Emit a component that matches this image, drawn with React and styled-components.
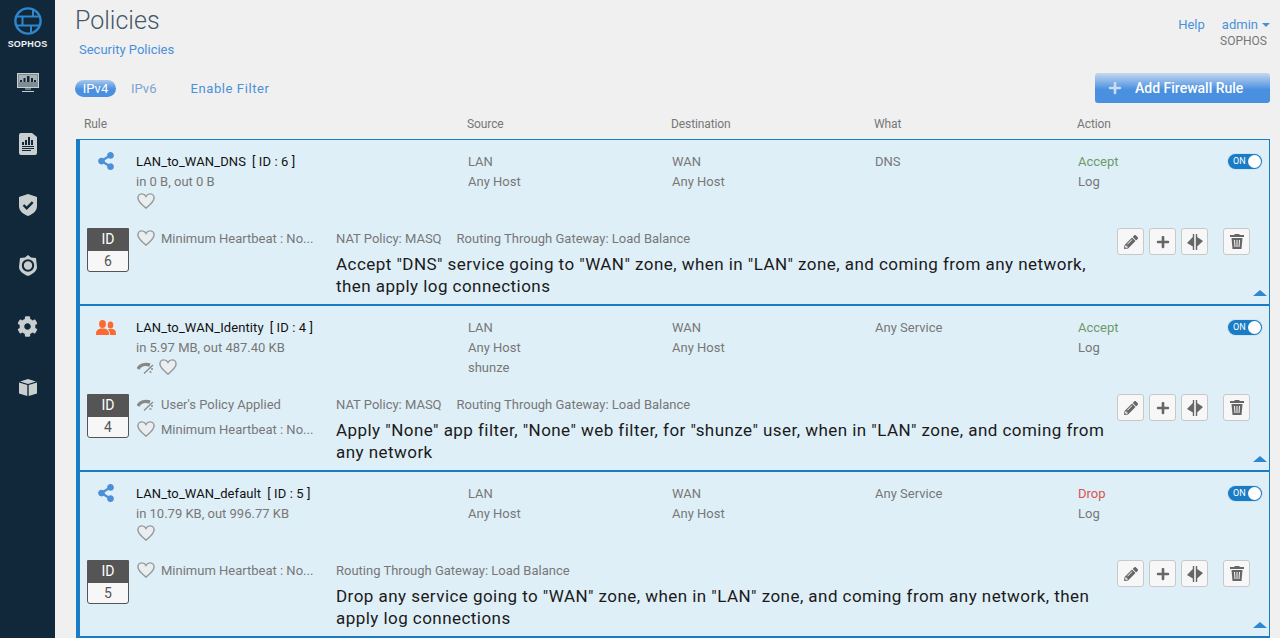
import React from "react";
import styled, { createGlobalStyle } from "styled-components";
import { FaCog, FaPencilAlt, FaPlus, FaShareAlt } from "react-icons/fa";

const Global = createGlobalStyle`
  html, body { margin: 0; padding: 0; height: 638px; overflow: hidden; background: #f0f0f0; }
  body { font-family: "Roboto", "Liberation Sans", sans-serif; font-size: 13px; color: #777; }
`;

const Page = styled.div`
  display: flex;
  height: 638px;
  overflow: hidden;
`;

const Sidebar = styled.nav`
  width: 55px;
  flex: none;
  background: #10283a;
  display: flex;
  flex-direction: column;
  align-items: center;
  padding-top: 7px;
  box-sizing: border-box;
`;

const Brand = styled.div`
  font-family: "Liberation Sans", sans-serif;
  font-weight: 700;
  font-size: 9px;
  letter-spacing: 0.2px;
  color: #f2f2f2;
  margin-top: 4px;
  margin-bottom: 3px;
`;

const NavItem = styled.div`
  height: 61px;
  width: 55px;
  display: flex;
  align-items: center;
  justify-content: center;
  color: #c9cfcf;
  flex: none;
`;

const Main = styled.main`
  flex: 1;
  padding: 0 10px 0 21px;
  min-width: 0;
`;

const Header = styled.header`
  display: flex;
  justify-content: space-between;
  height: 73px;
`;

const Title = styled.h1`
  font-size: 25px;
  line-height: 30px;
  font-weight: 300;
  color: #44586a;
  margin: 6px 0 0 -1px;
`;

const Crumb = styled.div`
  color: #4a90d9;
  font-size: 13px;
  line-height: 16px;
  margin: 6px 0 0 3px;
`;

const UserBox = styled.div`
  text-align: right;
  padding-top: 16px;
  line-height: 17px;
`;

const TopLink = styled.span`
  color: #4a90d9;
  margin-left: 17px;
`;

const Caret = styled.span`
  display: inline-block;
  margin-left: 4px;
  vertical-align: 2px;
  border: 4px solid transparent;
  border-top: 4px solid #4a90d9;
  border-bottom: 0;
`;

const Org = styled.div`
  font-size: 12px;
  color: #777;
  padding-right: 3px;
`;

const Toolbar = styled.div`
  display: flex;
  align-items: center;
  justify-content: space-between;
  height: 30px;
`;

const Tabs = styled.div`
  display: flex;
  align-items: center;
`;

const Pill = styled.span`
  color: #fff;
  width: 41px;
  height: 17px;
  line-height: 17px;
  text-align: center;
  border-radius: 9px;
  margin-left: -1px;
  background: linear-gradient(#a9c8ea, #4a90e0 55%);
`;

const Tab = styled.span`
  color: ${(p) => (p.$muted ? "#7ba4d2" : "#4a90d9")};
  margin-left: ${(p) => p.$gap}px;
  letter-spacing: ${(p) => (p.$wide ? "0.6px" : "0")};
`;

const AddButton = styled.button`
  width: 175px;
  height: 30px;
  border: 0;
  border-radius: 3px;
  background: linear-gradient(#c5d8ef, #4a90e0 55%);
  color: #fff;
  font: 500 14px "Roboto", sans-serif;
  display: flex;
  align-items: center;
  padding: 0 0 0 13px;
  gap: 13px;
  svg { color: #c9dcf2; }
`;

const HeadRow = styled.div`
  display: grid;
  grid-template-columns: 383px 204px 203px 203px 1fr;
  padding-left: 8px;
  height: 36px;
  line-height: 43px;
  font-size: 12px;
  letter-spacing: -0.1px;
  color: #777;
`;

const RuleList = styled.div`
  border-top: 1px solid #1a7cc4;
`;

const Rule = styled.section`
  position: relative;
  height: 166px;
  box-sizing: border-box;
  background: #dfeff8;
  border-left: 4px solid #1a7cc4;
  border-right: 1px solid #1a7cc4;
  border-bottom: 2px solid #1a7cc4;
`;

const Summary = styled.div`
  display: grid;
  grid-template-columns: 56px 332px 204px 203px 203px 1fr;
  height: 88px;
  padding-top: 12px;
  box-sizing: border-box;
  line-height: 20px;
`;

const RuleIcon = styled.div`
  padding-left: ${(p) => p.$left}px;
  padding-top: ${(p) => p.$top}px;
  height: 20px;
  color: ${(p) => p.$color};
`;

const Name = styled.div`
  color: #111;
  font-size: 13px;
  letter-spacing: 0.1px;
  span { margin-left: 6px; }
`;

const IconRow = styled.div`
  display: flex;
  align-items: center;
  gap: 4px;
  height: 20px;
  margin: -1px 0 0 1px;
`;

const Cell = styled.div`
  color: #777;
`;

const ActionCell = styled.div`
  display: flex;
  justify-content: space-between;
  padding-right: 7px;
`;

const Verdict = styled.div`
  color: ${(p) => (p.$drop ? "#d9534f" : "#6b9a6b")};
`;

const Toggle = styled.div`
  width: 34px;
  height: 15px;
  border-radius: 8px;
  background: #1a7cc4;
  box-shadow: 0 0 0 1px #cfe3f1;
  color: #fff;
  font-size: 9px;
  line-height: 15px;
  padding-left: 5px;
  box-sizing: border-box;
  position: relative;
  margin-top: 2px;
  &::after {
    content: "";
    position: absolute;
    right: 1px;
    top: 1px;
    width: 13px;
    height: 13px;
    border-radius: 50%;
    background: #fff;
  }
`;

const Details = styled.div`
  display: grid;
  grid-template-columns: 42px 207px 781px 1fr;
  padding-left: 7px;
`;

const IdBox = styled.div`
  width: 42px;
  height: 44px;
  border-radius: 0 0 3px 3px;
  overflow: hidden;
  border: 1px solid #555;
  box-sizing: border-box;
  text-align: center;
  background: #f7f7f7;
  color: #555;
  font-size: 14px;
`;

const IdHead = styled.div`
  background: #555;
  color: #fff;
  height: 22px;
  line-height: 21px;
`;

const IdValue = styled.div`
  line-height: 21px;
`;

const Status = styled.div`
  padding-left: 8px;
  margin-top: -1px;
`;

const StatusLine = styled.div`
  display: flex;
  align-items: center;
  height: 22px;
  margin-bottom: 3px;
  gap: 6px;
  white-space: nowrap;
`;

const Meta = styled.div`
  display: flex;
  gap: 15px;
  height: 22px;
  line-height: 22px;
`;

const Sentence = styled.p`
  margin: 3px 0 0;
  font-size: 17px;
  letter-spacing: 0.45px;
  line-height: 22px;
  color: #1a1a1a;
`;

const Actions = styled.div`
  display: flex;
  gap: 5px;
`;

const IconButton = styled.button`
  width: 27px;
  height: 27px;
  padding: 0;
  box-sizing: border-box;
  border: 1px solid #c8c8c8;
  border-radius: 3px;
  background: #f7f7f7;
  color: #666;
  display: flex;
  align-items: center;
  justify-content: center;
  margin-left: ${(p) => p.$gap || 0}px;
`;

const Collapse = styled.div`
  position: absolute;
  right: 2px;
  bottom: 8px;
  width: 0;
  height: 0;
  border-left: 7px solid transparent;
  border-right: 7px solid transparent;
  border-bottom: 6px solid #2f86d3;
`;

const LogoIcon = () => (
  <svg width="28" height="28" viewBox="0 0 28 28" fill="none" stroke="#2f86cc" strokeWidth="2.400">
    <circle cx="14" cy="14" r="12.600" />
    <path d="M2 9.500h24M2 18.500h24M8.500 9.500v9M19 2v7.500M17 18.500v8" strokeWidth="2" />
  </svg>
);

const MonitorIcon = () => (
  <svg width="22" height="20" viewBox="0 0 22 20">
    <path fill="#c9cfcf" d="M0 0h22v15H0z" />
    <path fill="#7f8c92" d="M1 1h20v13H1z" />
    <path fill="#a9b2b5" d="M2 2h18v7H2z" />
    <path fill="#10283a" d="M3 7h2v2H3zM6.500 5h2v4h-2zM10 3h2.500v6H10zM14 5h2v4h-2zM17 7h2v2h-2z" />
    <path fill="#5f8186" d="M8 15h6v2H8z" />
    <path fill="#c9cfcf" d="M5 18h12v1H5z" />
  </svg>
);

const ReportIcon = () => (
  <svg width="18" height="22" viewBox="0 0 18 22">
    <path fill="#c9cfcf" d="M2 0h11l5 4v16a2 2 0 0 1-2 2H2a2 2 0 0 1-2-2V2a2 2 0 0 1 2-2z" />
    <path fill="#10283a" d="M3 9h2v3H3zM6 7h2v5H6zM9 4h2v8H9zM12 7h2v5h-2zM3 13h12v1H3zM3 15h12v1H3zM3 17h9v1H3z" />
  </svg>
);

const ShieldCheckIcon = () => (
  <svg width="18" height="22" viewBox="0 0 18 22">
    <path fill="#c9cfcf" d="M9 0l9 3v9c0 5-4 8-9 10-5-2-9-5-9-10V3z" />
    <path fill="none" stroke="#10283a" strokeWidth="2.400" d="M4.500 11l3.200 3.200 6-6" />
  </svg>
);

const ShieldRingIcon = () => (
  <svg width="18" height="21" viewBox="0 0 18 21">
    <path fill="#c9cfcf" d="M9 0l3 2.500 5 .5 1 9c0 4-4 7-9 9-5-2-9-5-9-9l1-9 5-.5z" />
    <circle cx="9" cy="10.500" r="5.200" fill="none" stroke="#10283a" strokeWidth="2" />
  </svg>
);

const BoxIcon = () => (
  <svg width="18" height="17" viewBox="0 0 18 17">
    <path fill="#c9cfcf" d="M9 0l8 2.500L9 5 1 2.500zM0 3.500l8.300 2.600V17L0 14.500zM18 3.500L9.700 6.100V17l8.300-2.500z" />
  </svg>
);

const HeartIcon = ({ size = 18 }) => (
  <svg width={size} height={size * 0.9} viewBox="0 0 20 18">
    <path
      fill="#e9eef0"
      stroke="#999"
      strokeWidth="1.600"
      d="M10 16.800C4 12 1 9 1 5.600 1 3 3 1 5.500 1 7.400 1 9 2 10 3.800 11 2 12.600 1 14.500 1 17 1 19 3 19 5.600 19 9 16 12 10 16.800z"
    />
  </svg>
);

const GaugeIcon = () => (
  <svg width="18" height="13" viewBox="0 0 18 13">
    <path fill="none" stroke="#888" strokeWidth="3.400" d="M1 8C3 4 8 2.500 13 4" />
    <path fill="none" stroke="#888" strokeWidth="1.300" d="M7 12.500L16 4M14 8h2M12.500 11h2" />
  </svg>
);

const UsersIcon = () => (
  <svg width="20" height="15" viewBox="0 0 20 15" fill="#fb6a33">
    <ellipse cx="6.500" cy="4" rx="3.400" ry="4" />
    <path d="M0 15c0-4 .500-5 4.500-6.500h4c4 1.500 4.500 2.500 4.500 6.500z" />
    <ellipse cx="14.500" cy="5" rx="2.800" ry="3.500" />
    <path d="M12 9h5c2.500 1 3 2 3 6h-6c0-2-.500-4.500-2-6z" />
  </svg>
);

const TrashIcon = () => (
  <svg width="14" height="15" viewBox="0 0 14 15" fill="#666">
    <path d="M4.500 0h5v1H14v2H0V1h4.500zM1.500 4h11l-1 11h-9zM4 6l.5 7h1L5 6zM6.500 6v7h1V6zM9 6l-.5 7h1L10 6z" fillRule="evenodd" />
  </svg>
);

const SplitIcon = () => (
  <svg width="16" height="16" viewBox="0 0 16 16" fill="#666">
    <path d="M7.200 0v16H5.800v-3.500L0 9l5.800-6V0z" />
    <path d="M8.800 0h1.400v3L16 7l-5.800 5.500V16H8.800z" />
  </svg>
);

const rules = [
  {
    icon: "share",
    name: "LAN_to_WAN_DNS",
    id: 6,
    traffic: "in 0 B, out 0 B",
    source: ["LAN", "Any Host"],
    what: "DNS",
    meta: ["NAT Policy: MASQ", "Routing Through Gateway: Load Balance"],
    text: 'Accept "DNS" service going to "WAN" zone, when in "LAN" zone, and coming from any network, then apply log connections',
  },
  {
    icon: "users",
    name: "LAN_to_WAN_Identity",
    id: 4,
    traffic: "in 5.97 MB, out 487.40 KB",
    source: ["LAN", "Any Host", "shunze"],
    what: "Any Service",
    gauge: true,
    meta: ["NAT Policy: MASQ", "Routing Through Gateway: Load Balance"],
    text: 'Apply "None" app filter, "None" web filter, for "shunze" user, when in "LAN" zone, and coming from any network',
  },
  {
    icon: "share",
    name: "LAN_to_WAN_default",
    id: 5,
    traffic: "in 10.79 KB, out 996.77 KB",
    source: ["LAN", "Any Host"],
    what: "Any Service",
    drop: true,
    meta: ["Routing Through Gateway: Load Balance"],
    text: 'Drop any service going to "WAN" zone, when in "LAN" zone, and coming from any network, then apply log connections',
  },
];

function RuleCard({ rule }) {
  const isUsers = rule.icon === "users";
  return (
    <Rule>
      <Summary>
        <RuleIcon $color={isUsers ? "#fb6a33" : "#4a90d9"} $left={isUsers ? 16 : 17} $top={isUsers ? 2 : 0}>
          {isUsers ? <UsersIcon /> : <FaShareAlt size={18} />}
        </RuleIcon>
        <div>
          <Name>
            {rule.name}<span>[ ID : {rule.id} ]</span>
          </Name>
          <Cell>{rule.traffic}</Cell>
          <IconRow>
            {rule.gauge && <GaugeIcon />}
            <HeartIcon />
          </IconRow>
        </div>
        <Cell>
          {rule.source.map((s) => (
            <div key={s}>{s}</div>
          ))}
        </Cell>
        <Cell>
          <div>WAN</div>
          <div>Any Host</div>
        </Cell>
        <Cell>{rule.what}</Cell>
        <ActionCell>
          <div>
            <Verdict $drop={rule.drop}>{rule.drop ? "Drop" : "Accept"}</Verdict>
            <Cell>Log</Cell>
          </div>
          <Toggle>ON</Toggle>
        </ActionCell>
      </Summary>
      <Details>
        <IdBox>
          <IdHead>ID</IdHead>
          <IdValue>{rule.id}</IdValue>
        </IdBox>
        <Status>
          {rule.gauge && (
            <StatusLine>
              <GaugeIcon />
              <span>User's Policy Applied</span>
            </StatusLine>
          )}
          <StatusLine>
            <HeartIcon />
            <span>Minimum Heartbeat : No...</span>
          </StatusLine>
        </Status>
        <div>
          <Meta>
            {rule.meta.map((m) => (
              <span key={m}>{m}</span>
            ))}
          </Meta>
          <Sentence>{rule.text}</Sentence>
        </div>
        <Actions>
          <IconButton><FaPencilAlt size={14} /></IconButton>
          <IconButton><FaPlus size={14} /></IconButton>
          <IconButton><SplitIcon /></IconButton>
          <IconButton $gap={10}><TrashIcon /></IconButton>
        </Actions>
      </Details>
      <Collapse />
    </Rule>
  );
}

export default function App() {
  return (
    <Page>
      <Global />
      <Sidebar>
        <LogoIcon />
        <Brand>SOPHOS</Brand>
        <NavItem><MonitorIcon /></NavItem>
        <NavItem><ReportIcon /></NavItem>
        <NavItem><ShieldCheckIcon /></NavItem>
        <NavItem><ShieldRingIcon /></NavItem>
        <NavItem><FaCog size={21} /></NavItem>
        <NavItem><BoxIcon /></NavItem>
      </Sidebar>
      <Main>
        <Header>
          <div>
            <Title>Policies</Title>
            <Crumb>Security Policies</Crumb>
          </div>
          <UserBox>
            <TopLink>Help</TopLink>
            <TopLink>admin<Caret /></TopLink>
            <Org>SOPHOS</Org>
          </UserBox>
        </Header>
        <Toolbar>
          <Tabs>
            <Pill>IPv4</Pill>
            <Tab $muted $gap={15}>IPv6</Tab>
            <Tab $wide $gap={34}>Enable Filter</Tab>
          </Tabs>
          <AddButton><FaPlus size={14} />Add Firewall Rule</AddButton>
        </Toolbar>
        <HeadRow>
          <span>Rule</span>
          <span>Source</span>
          <span>Destination</span>
          <span>What</span>
          <span>Action</span>
        </HeadRow>
        <RuleList>
          {rules.map((r) => (
            <RuleCard key={r.id} rule={r} />
          ))}
        </RuleList>
      </Main>
    </Page>
  );
}
